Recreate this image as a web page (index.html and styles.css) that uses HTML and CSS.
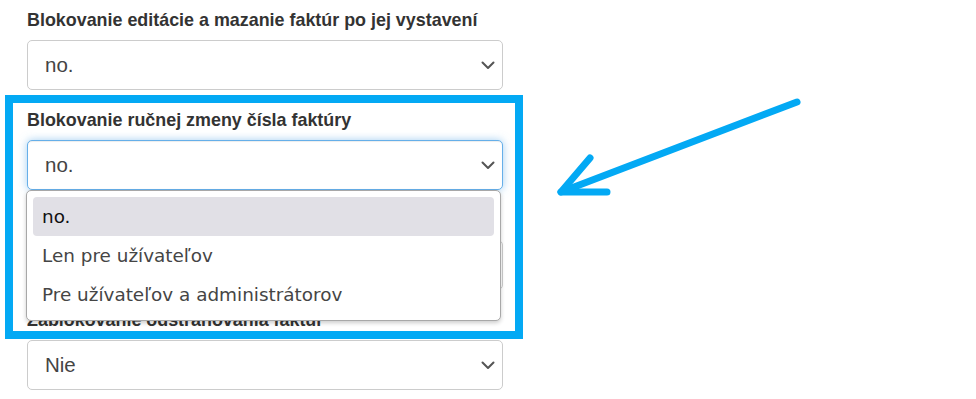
FILE: index.html
```html
<!DOCTYPE html>
<html lang="sk">
<head>
    <meta charset="UTF-8">
    <meta name="viewport" content="width=device-width, initial-scale=1.0">
    <title>Nastavenia faktúr</title>
    <link rel="stylesheet" href="styles.css">
</head>
<body>
    <div class="settings">
        <div class="form-group">
            <label class="control-label">Blokovanie editácie a mazanie faktúr po jej vystavení</label>
            <div class="select">
                <span class="select-value">no.</span>
                <svg class="chevron" width="14" height="9" viewBox="0 0 14 9"><polyline points="1.5,1.5 7,7 12.5,1.5" /></svg>
            </div>
        </div>

        <div class="form-group">
            <label class="control-label">Blokovanie ručnej zmeny čísla faktúry</label>
            <div class="select-wrap">
                <div class="select focus">
                    <span class="select-value">no.</span>
                    <svg class="chevron" width="14" height="9" viewBox="0 0 14 9"><polyline points="1.5,1.5 7,7 12.5,1.5" /></svg>
                </div>
                <ul class="dropdown">
                    <li class="option selected">no.</li>
                    <li class="option">Len pre užívateľov</li>
                    <li class="option">Pre užívateľov a administrátorov</li>
                </ul>
            </div>
        </div>

        <!-- covered by the open dropdown -->
        <div class="form-group">
            <label class="control-label"></label>
            <div class="select">
                <span class="select-value"></span>
                <svg class="chevron" width="14" height="9" viewBox="0 0 14 9"><polyline points="1.5,1.5 7,7 12.5,1.5" /></svg>
            </div>
        </div>

        <div class="form-group">
            <label class="control-label">Zablokovanie odstraňovania faktúr</label>
            <div class="select">
                <span class="select-value">Nie</span>
                <svg class="chevron" width="14" height="9" viewBox="0 0 14 9"><polyline points="1.5,1.5 7,7 12.5,1.5" /></svg>
            </div>
        </div>
    </div>

    <!-- annotation -->
    <div class="highlight-box"></div>
    <svg class="arrow" width="976" height="399" viewBox="0 0 976 399">
        <polyline points="797,102 561,192" />
        <polyline points="590,158 561,192 607,192" />
    </svg>
</body>
</html>
```

FILE: styles.css
```css
:root {
    --text-color: #333;
    --select-text: #444;
    --border-color: #ccc;
    --focus-border: #66afe9;
    --annotation: #03a9f4;
}

body {
    margin: 0;
    background: #fff;
    font-family: 'Liberation Sans', Arial, sans-serif;
    color: var(--text-color);
}

.settings {
    padding: 7px 0 0 27px;
    width: 476px;
}

.form-group {
    margin-bottom: 17px;
}

.control-label {
    display: block;
    height: 26px;
    font-size: 17.9px;
    font-weight: bold;
    line-height: 26px;
    margin-bottom: 7px;
    white-space: nowrap;
}

.select-wrap {
    position: relative;
}

.select {
    display: flex;
    align-items: center;
    justify-content: space-between;
    height: 50px;
    box-sizing: border-box;
    border: 1px solid var(--border-color);
    border-radius: 5px;
    padding: 0 7px 0 17px;
    background: #fff;
    font-size: 20.5px;
    color: var(--select-text);
}

.select.focus {
    border-color: var(--focus-border);
    box-shadow: inset 0 1px 1px rgba(0,0,0,0.075), 0 0 8px rgba(102,175,233,0.6);
}

.chevron polyline {
    fill: none;
    stroke: #555;
    stroke-width: 2;
    stroke-linecap: round;
    stroke-linejoin: round;
}

.dropdown {
    position: absolute;
    top: 50px;
    left: -1px;
    width: 475px;
    box-sizing: border-box;
    margin: 0;
    padding: 6px;
    list-style: none;
    background: #fff;
    border: 1px solid #a8a8a8;
    border-radius: 5px;
    box-shadow: 0 2px 4px rgba(0,0,0,0.2);
    font-family: 'DejaVu Sans', Verdana, sans-serif;
    font-size: 18.4px;
    color: #454545;
    z-index: 2;
}

.option {
    height: 39px;
    line-height: 39px;
    padding-left: 9px;
    border-radius: 4px;
}

.option.selected {
    background: #e1e0e6;
    color: #111;
}

.highlight-box {
    position: absolute;
    left: 5px;
    top: 95px;
    width: 518px;
    height: 244px;
    box-sizing: border-box;
    border: 8px solid var(--annotation);
    z-index: 3;
}

.arrow {
    position: absolute;
    left: 0;
    top: 0;
    z-index: 3;
}

.arrow polyline {
    fill: none;
    stroke: var(--annotation);
    stroke-width: 7;
    stroke-linecap: round;
    stroke-linejoin: round;
}
```
